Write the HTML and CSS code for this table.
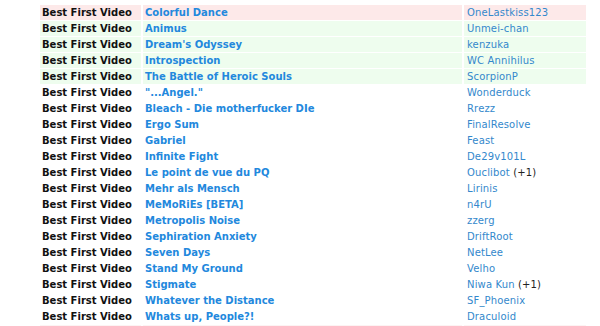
FILE: index.html
```html
<!DOCTYPE html>
<html>
<head>
<meta charset="utf-8">
<link rel="stylesheet" href="styles.css">
</head>
<body>
<div class="wrap">
<table class="awards">
<tbody>
<tr class="pink"><td class="cat">Best First Video</td><td class="title">Colorful Dance</td><td class="user">OneLastkiss123</td></tr>
<tr class="green"><td class="cat">Best First Video</td><td class="title">Animus</td><td class="user">Unmei-chan</td></tr>
<tr class="green"><td class="cat">Best First Video</td><td class="title">Dream's Odyssey</td><td class="user">kenzuka</td></tr>
<tr class="green"><td class="cat">Best First Video</td><td class="title">Introspection</td><td class="user">WC Annihilus</td></tr>
<tr class="green"><td class="cat">Best First Video</td><td class="title">The Battle of Heroic Souls</td><td class="user">ScorpionP</td></tr>
<tr><td class="cat">Best First Video</td><td class="title">"...Angel."</td><td class="user">Wonderduck</td></tr>
<tr><td class="cat">Best First Video</td><td class="title">Bleach - Die motherfucker DIe</td><td class="user">Rrezz</td></tr>
<tr><td class="cat">Best First Video</td><td class="title">Ergo Sum</td><td class="user">FinalResolve</td></tr>
<tr><td class="cat">Best First Video</td><td class="title">Gabriel</td><td class="user">Feast</td></tr>
<tr><td class="cat">Best First Video</td><td class="title">Infinite Fight</td><td class="user">De29v101L</td></tr>
<tr><td class="cat">Best First Video</td><td class="title">Le point de vue du PQ</td><td class="user">Ouclibot <span class="extra">(+1)</span></td></tr>
<tr><td class="cat">Best First Video</td><td class="title">Mehr als Mensch</td><td class="user">Lirinis</td></tr>
<tr><td class="cat">Best First Video</td><td class="title">MeMoRiEs [BETA]</td><td class="user">n4rU</td></tr>
<tr><td class="cat">Best First Video</td><td class="title">Metropolis Noise</td><td class="user">zzerg</td></tr>
<tr><td class="cat">Best First Video</td><td class="title">Sephiration Anxiety</td><td class="user">DriftRoot</td></tr>
<tr><td class="cat">Best First Video</td><td class="title">Seven Days</td><td class="user">NetLee</td></tr>
<tr><td class="cat">Best First Video</td><td class="title">Stand My Ground</td><td class="user">Velho</td></tr>
<tr><td class="cat">Best First Video</td><td class="title">Stigmate</td><td class="user">Niwa Kun <span class="extra">(+1)</span></td></tr>
<tr><td class="cat">Best First Video</td><td class="title">Whatever the Distance</td><td class="user">SF_Phoenix</td></tr>
<tr><td class="cat">Best First Video</td><td class="title">Whats up, People?!</td><td class="user">Draculoid</td></tr>
<tr class="pinkline"><td class="cat"></td><td class="title"></td><td class="user"></td></tr>
</tbody>
</table>
</div>
</body>
</html>
```
FILE: styles.css
```css
html, body {
  margin: 0;
  padding: 0;
  background: #ffffff;
}
.wrap {
  padding: 4px 0 0 38px;
}
.awards {
  border-collapse: separate;
  border-spacing: 2px 1px;
  width: 550px;
  table-layout: fixed;
}
.awards td {
  height: 15px;
  padding: 0 0 0 2px;
  line-height: 15px;
  white-space: nowrap;
  overflow: hidden;
  vertical-align: middle;
}
.cat {
  width: 99px;
  font-family: "DejaVu Sans", Verdana, sans-serif;
  font-weight: bold;
  font-size: 10px;
  color: #111111;
}
.title {
  font-family: "DejaVu Sans", Verdana, sans-serif;
  font-weight: bold;
  font-size: 10px;
  color: #2288dd;
}
.user {
  width: 119px;
  font-family: "DejaVu Sans", Verdana, sans-serif;
  font-size: 10px;
  letter-spacing: 0.15px;
  color: #3388cc;
  padding-left: 3px !important;
}
.extra {
  color: #222222;
}
.pink td { background: #fde9e9; }
.green td { background: #eefdee; }
.pinkline td { background: #fdf3f3; }
```
